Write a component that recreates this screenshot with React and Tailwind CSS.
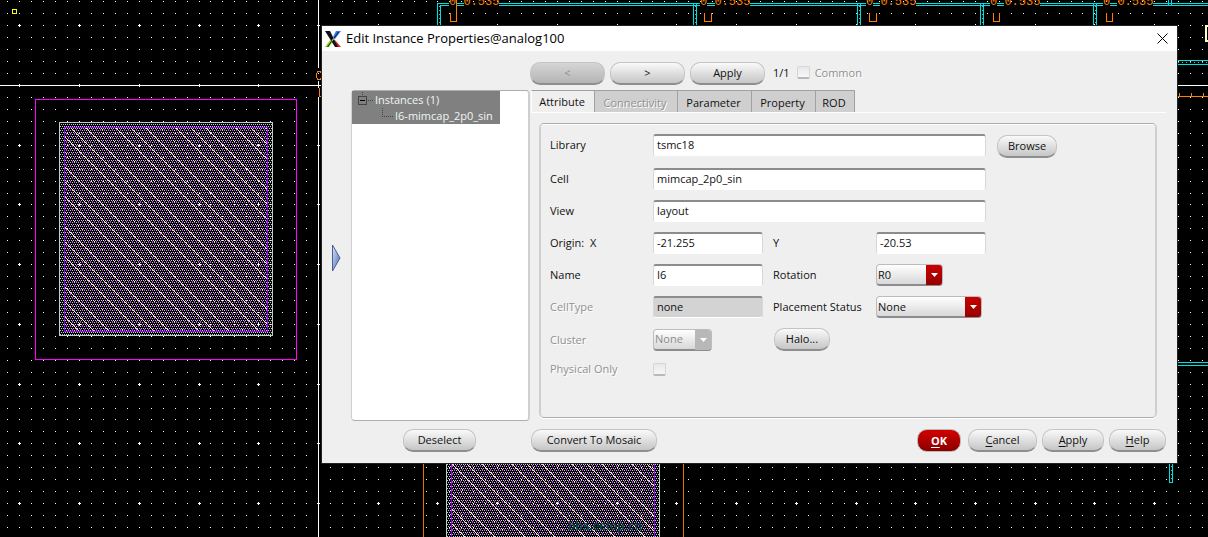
import React from "react";

const STEP = 11.945;
const AXIS_X = 318;
const AXIS_Y = 85;

const pixel = (x, y) => `M${x} ${y}h1v1h-1z`;

// grid dots, every fifth one is a small cross
const gridPath = () => {
  let d = "";
  for (let i = -27; i < 140; i++) {
    for (let j = -8; j < 90; j++) {
      const x = Math.round(AXIS_X + i * STEP);
      const y = Math.round(AXIS_Y + j * STEP);
      d += pixel(x, y);
      if (i % 5 === 0 && j % 5 === 0) {
        d += `M${x - 1} ${y}h3v1h-3zM${x} ${y - 1}h1v3h-1z`;
      }
    }
  }
  return d;
};

const diagonalPath = () => {
  let d = "";
  for (let y = 0; y < 60; y++) {
    for (const offset of [3, 18, 33, 48]) {
      if (offset === 33 && y % 4 > 1) continue;
      d += pixel((y + offset) % 60, y);
    }
  }
  return d;
};

const GRID = gridPath();
const DIAGONALS = diagonalPath();

const Capacitor = ({ x, y }) => (
  <g>
    <rect x={x} y={y} width="214" height="214" fill="#000" />
    <rect x={x} y={y} width="214" height="214" fill="url(#metal)" />
    <rect x={x + 5} y={y + 5} width="204" height="204" fill="url(#via)" />
    <rect x={x + 5} y={y + 5} width="204" height="204" fill="url(#diagonals)" />
    <rect x={x + 0.5} y={y + 0.5} width="213" height="213" fill="none" stroke="#c0d0d0" />
    <rect x={x + 5.5} y={y + 5.5} width="203" height="204" fill="none" stroke="#9900ff" />
  </g>
);

const LayoutCanvas = () => (
  <svg
    className="absolute inset-0 h-full w-full"
    shapeRendering="crispEdges"
    aria-hidden="true"
  >
    <defs>
      <pattern id="metal" width="2" height="4" patternUnits="userSpaceOnUse">
        <path d={pixel(1, 0) + pixel(0, 2)} fill="#c0d0d0" />
      </pattern>
      <pattern id="via" width="4" height="8" patternUnits="userSpaceOnUse">
        <path d={pixel(0, 1) + pixel(0, 2) + pixel(2, 5) + pixel(2, 6)} fill="#d040ff" />
      </pattern>
      <pattern id="diagonals" width="60" height="60" patternUnits="userSpaceOnUse">
        <path d={DIAGONALS} fill="#ffe6cc" />
      </pattern>
    </defs>

    <Capacitor x={59} y={122} />
    <Capacitor x={446} y={400} />
    <path d={GRID} fill="#fff" />

    <rect x="35.5" y="99.5" width="261" height="260" fill="none" stroke="#ff00ff" />
    <path d="M423.5 400V900M683.5 400V900" stroke="#e07800" />
    <rect x="12.5" y="9.5" width="4" height="4" fill="none" stroke="#ffff00" />

    <path d="M318.5 0V68M318.5 81V88M318.5 97V2000M0 85.5H2400" stroke="#fff" />
    <path d="M317.5 72.5L316.5 74V77L317.5 79.5H320.5L321.5 77V74L320.5 71.5H318ZM319.5 88V96.5H322" fill="none" stroke="#ff8000" />

    <g fill="none" stroke="#00e0e0">
      <path d="M437.5 30V3.5H449M440.5 30V5.5H449M499 3.5H700M499 5.5H700M750 3.5H866M750 5.5H866M916 3.5H990M916 5.5H990M1040 3.5H1103M1040 5.5H1103M1153 3.5H2400M1153 5.5H2400" />
      <path d="M456 3.5H464M456 5.5H464M707 3.5H715M707 5.5H715M873 3.5H880M873 5.5H880M997 3.5H1004M997 5.5H1004M1110 3.5H1117M1110 5.5H1117" />
      <path d="M693.5 4V30M696.5 4V30M857.5 4V30M860.5 4V30M980.5 4V30M983.5 4V30M1093.5 4V30M1096.5 4V30M1168.5 0V5M1171.5 0V5" />
      <path d="M1170 60.5H2400M1170 64.5H2400M1170 362.5H2400M1170 365.5H2400M1169.5 440V482.5H1172.5V440" />
      <path d="M439 6V30M695 6V30M859 6V30M982 6V30M1095 6V30M1171 450V482M1170 62.5H2400" strokeDasharray="1 3" />
    </g>

    <g fill="none" stroke="#ff8000">
      <path d="M450.5 13V21.5H456.5V0M704.5 13V21.5H711.5V13M869.5 13V21.5H876.5V13M993.5 13V21.5H999.5V13M1106.5 13V21.5H1112.5V13" />
      <path d="M1170 96.5H2400M1179.5 93V96M1191.5 93V96M1203.5 93V96" />
    </g>
    <g fill="#ff8000" fontFamily="Liberation Mono, monospace" fontSize="12">
      {[449, 700, 866, 990, 1103].map((x) => (
        <text key={x} x={x} y="5" xmlSpace="preserve">
          0 0.535
        </text>
      ))}
    </g>

    <rect x="1206" y="26" width="20" height="15" fill="none" stroke="#ffffc0" strokeWidth="2" />
    <text x="568" y="530" fill="#004040" fontFamily="Liberation Sans, sans-serif" fontSize="12" fontWeight="bold">
      bbs.eetop.cn
    </text>
  </svg>
);

const Button = ({ className = "", primary, children, ...props }) => (
  <button
    type="button"
    className={`h-[23px] rounded-[10px] border text-center leading-[18px] ${
      primary
        ? "border-[#b9b9b9] bg-linear-to-b from-[#d20000] to-[#8c0000] font-bold text-white"
        : "border-[#c4c4c4] border-b-2 border-b-[#8e8e8e] bg-linear-to-b from-[#fafafa] to-[#c6c6c6] disabled:from-[#d6d6d6] disabled:to-[#b4b4b4] disabled:text-[#8c8c8c]"
    } ${className}`}
    {...props}
  >
    {children}
  </button>
);

const TextField = ({ className = "", ...props }) => (
  <input
    type="text"
    className={`h-[22px] min-w-0 rounded-[3px] border border-t-2 border-[#d8d8d8] border-t-[#8c8c8c] border-b-white bg-white px-[3px] pb-0.5 outline-none read-only:bg-[#d3d3d3] ${className}`}
    {...props}
  />
);

const SelectField = ({ className = "", disabled, children, ...props }) => (
  <div className={`relative ${className}`}>
    <select
      disabled={disabled}
      className="block h-[22px] w-full appearance-none rounded-[4px] border border-b-2 border-[#bcbcbc] border-b-[#8c8c8c] bg-linear-to-b from-white to-[#d8d8d8] pl-px outline-none disabled:text-[#8c8c8c] disabled:opacity-100"
      {...props}
    >
      {children}
    </select>
    <span
      className={`pointer-events-none absolute top-px right-px bottom-px flex w-4 items-center justify-center rounded-r-[3px] ${
        disabled ? "bg-[#b8b8b8]" : "bg-linear-to-b from-[#c80000] to-[#960000]"
      }`}
    >
      <svg width="7" height="4" viewBox="0 0 7 4">
        <path d="M0 0h7L3.5 4z" fill="#fff" />
      </svg>
    </span>
  </div>
);

const CheckBox = (props) => (
  <input
    type="checkbox"
    className="h-[13px] w-[13px] appearance-none rounded-[2px] border border-b-2 border-[#d6d6d6] border-b-[#b8b8b8] bg-linear-to-b from-[#e8e8e8] to-[#f6f6f6]"
    {...props}
  />
);

const dim = "text-[#919191] [text-shadow:1px_1px_0_white]";

const TitleBar = () => (
  <header className="flex h-[25px] items-center bg-white pr-2 pl-[3px]">
    <svg width="16" height="16" viewBox="0 0 16 16" aria-hidden="true">
      <path d="M11 0h5L10 8 8 6z" fill="#2a7cf0" />
      <path d="M0 16l6-8 2 2-4 6z" fill="#86d820" />
      <path d="M10 9l6 7h-5z" fill="#e02020" />
      <path d="M0 0h5l8 16h-3zM13 1L2 16h1L14 1z" fill="#111" />
    </svg>
    <h1 className="ml-[5px] pb-0.5 text-[13px] leading-5 text-black">
      Edit Instance Properties@analog100
    </h1>
    <button type="button" aria-label="Close" className="ml-auto p-px">
      <svg width="11" height="11" viewBox="0 0 11 11">
        <path d="M.5 .5l10 10M10.5 .5l-10 10" stroke="#000" />
      </svg>
    </button>
  </header>
);

const Toolbar = () => (
  <div className="flex items-center gap-[5px] pt-[11px] pb-[5px] pl-[208px]">
    <Button className="w-[75px]" disabled>
      &lt;
    </Button>
    <Button className="w-[75px]">&gt;</Button>
    <Button className="w-[75px]">Apply</Button>
    <span className="ml-[3px] mr-0.5 pb-0.5">1/1</span>
    <label className={`flex items-center gap-[5px] pb-0.5 ${dim}`}>
      <CheckBox disabled />
      Common
    </label>
  </div>
);

const InstanceTree = () => (
  <div className="w-[179px] shrink-0 rounded-[4px] border-x-2 border-y border-l border-[#cfcfcf] border-y-[#adadad] bg-white">
    <ul role="tree" className="mr-7 bg-[#808080] pt-px text-[#eef6f4]">
      <li role="treeitem" className="flex h-4 items-center pl-[5px]">
        <svg width="17" height="16" className="mr-px" shapeRendering="crispEdges">
          <rect x="1.5" y="4.5" width="8" height="8" fill="none" stroke="#444" />
          <path d="M3 8.5h5" stroke="#000" />
          <path d="M11 8.5h5M5.5 0v4" stroke="#444" strokeDasharray="1 1" />
        </svg>
        Instances (1)
      </li>
      <li role="treeitem" className="flex h-4 items-center pl-[29px]">
        <svg width="13" height="16" className="mr-px" shapeRendering="crispEdges">
          <path d="M1.5 0v8.5h10" fill="none" stroke="#444" strokeDasharray="1 1" />
        </svg>
        I6-mimcap_2p0_sin
      </li>
    </ul>
  </div>
);

const tabs = [
  { name: "Attribute", width: "w-[63px]", active: true },
  { name: "Connectivity", width: "w-[83px]", disabled: true },
  { name: "Parameter", width: "w-[74px]" },
  { name: "Property", width: "w-[64px]" },
  { name: "ROD", width: "w-[40px]" },
];

const Tabs = () => (
  <div role="tablist" className="flex border-b border-white">
    {tabs.map((tab) => (
      <button
        key={tab.name}
        type="button"
        role="tab"
        aria-selected={!!tab.active}
        disabled={tab.disabled}
        className={`h-[22px] border-t border-[#a0a0a0] pr-0.5 ${tab.width} ${
          tab.active ? "border-l border-l-white bg-[#efefef]" : "border-l bg-[#cfcfcf] pt-0.5 last:border-r"
        } ${tab.disabled ? dim : ""}`}
      >
        {tab.name}
      </button>
    ))}
  </div>
);

const AttributeForm = () => (
  <form className="mt-[10px] ml-2 grid grid-cols-[103px_120px_103px_121px_1fr] items-center gap-y-[10px] rounded-[5px] border-x-2 border-y border-[#cfcfcf] border-y-[#adadad] pt-[10px] pb-10 pl-[9px] shadow-[inset_0_1px_0_white,0_1px_0_white]">
    <label htmlFor="library" className="pb-0.5">Library</label>
    <TextField id="library" defaultValue="tsmc18" className="col-span-3 mr-[11px] mb-0.5" />
    <Button className="mt-px w-[60px]">Browse</Button>

    <label htmlFor="cell">Cell</label>
    <TextField id="cell" defaultValue="mimcap_2p0_sin" className="col-span-3 mr-[11px]" />
    <span />

    <label htmlFor="view">View</label>
    <TextField id="view" defaultValue="layout" className="col-span-3 mr-[11px]" />
    <span />

    <label htmlFor="originX" className="whitespace-pre">Origin:  X</label>
    <TextField id="originX" defaultValue="-21.255" className="mr-[10px]" />
    <label htmlFor="originY">Y</label>
    <TextField id="originY" defaultValue="-20.53" className="mr-[11px]" />
    <span />

    <label htmlFor="name">Name</label>
    <TextField id="name" defaultValue="I6" className="mr-[10px]" />
    <label htmlFor="rotation">Rotation</label>
    <SelectField id="rotation" className="w-[67px]">
      <option>R0</option>
      <option>R90</option>
    </SelectField>
    <span />

    <label htmlFor="cellType" className={dim}>CellType</label>
    <TextField id="cellType" defaultValue="none" readOnly className="mr-[10px]" />
    <label htmlFor="placement">Placement Status</label>
    <SelectField id="placement" className="w-[106px]">
      <option>None</option>
      <option>Placed</option>
    </SelectField>
    <span />

    <label htmlFor="cluster" className={dim}>Cluster</label>
    <SelectField id="cluster" className="w-[59px]" disabled>
      <option>None</option>
    </SelectField>
    <Button className="ml-px w-14">Halo...</Button>
    <span />
    <span />

    <label htmlFor="physical" className={dim}>Physical Only</label>
    <CheckBox id="physical" disabled />
  </form>
);

const Footer = () => (
  <footer className="flex pt-2 pr-[11px] pb-[11px] pl-[81px]">
    <Button className="mr-[55px] w-[73px]">Deselect</Button>
    <Button className="w-[126px]">Convert To Mosaic</Button>
    <div className="ml-auto flex gap-[5px]">
      <Button primary className="mr-0.5 w-11">
        <u className="underline-offset-2">O</u>K
      </Button>
      <Button className="w-[69px]">
        <u className="underline-offset-2">C</u>ancel
      </Button>
      <Button className="w-[62px]">
        <u className="underline-offset-2">A</u>pply
      </Button>
      <Button className="w-[57px]">
        <u className="underline-offset-2">H</u>elp
      </Button>
    </div>
  </footer>
);

const App = () => {
  return (
    <main className="relative min-h-screen overflow-hidden bg-black pt-[26px] pr-[31px] pb-[74px] pl-[322px]">
      <LayoutCanvas />
      <section className="relative bg-[#efefef] font-['Open_Sans',sans-serif] text-[11px] leading-4 text-[#111] shadow-[0_0_0_1px_#222]">
        <TitleBar />
        <Toolbar />
        <div className="flex">
          <div className="flex w-[29px] shrink-0 items-center justify-center pt-1">
            <svg width="9" height="28" viewBox="0 0 9 28" aria-hidden="true">
              <defs>
                <linearGradient id="arrow" x1="0" y1="0" x2="1" y2="1">
                  <stop offset="0" stopColor="#dbe6fa" />
                  <stop offset="1" stopColor="#4a68b0" />
                </linearGradient>
              </defs>
              <path d="M.5 1L8 14 .5 27z" fill="url(#arrow)" stroke="#4a5f96" />
            </svg>
          </div>
          <InstanceTree />
          <div className="min-w-0 flex-1 pr-[11px] pb-[3px] pl-px">
            <Tabs />
            <div className="pr-[9px]">
              <AttributeForm />
            </div>
          </div>
        </div>
        <Footer />
      </section>
    </main>
  );
};

export default App;
